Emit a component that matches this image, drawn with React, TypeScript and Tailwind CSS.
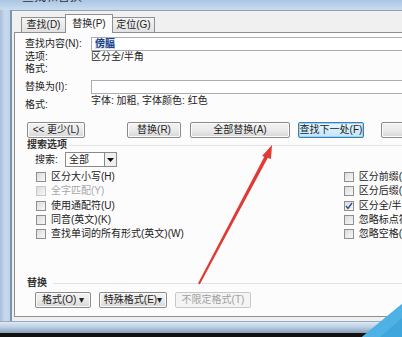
import React from "react";

function Btn({ children, w, primary, disabled }: { children: React.ReactNode; w: string; primary?: boolean; disabled?: boolean }) {
  return (
    <div
      className={`${w} h-[16px] flex items-center justify-center rounded-[2px] border text-[10px] leading-none ${
        primary
          ? "border-[#3c7fb1] bg-gradient-to-b from-[#eaf6fd] to-[#bee6fd] shadow-[inset_0_0_0_1px_#9ed3f3]"
          : disabled
          ? "border-[#c8c8c8] bg-[#f4f4f4] text-[#a0a0a0]"
          : "border-[#8a8a8a] bg-gradient-to-b from-[#f2f2f2] via-[#ebebeb] to-[#d6d6d6] shadow-[inset_0_0_0_1px_#fcfcfc]"
      }`}
    >
      {children}
    </div>
  );
}

function Check({ label, checked, disabled }: { label: string; checked?: boolean; disabled?: boolean }) {
  return (
    <div className="h-[14.3px] flex items-center gap-[5px]">
      <div
        className={`w-[10px] h-[10px] border ${disabled ? "border-[#c8c8c8]" : "border-[#8e8f8f]"} bg-gradient-to-br from-[#dcdcdc] to-[#f8f8f8] flex items-center justify-center`}
      >
        {checked && (
          <svg width="8" height="8" viewBox="0 0 8 8">
            <path d="M1 4 L3 6.5 L7 1" fill="none" stroke="#2a4c8c" strokeWidth="1.3" />
          </svg>
        )}
      </div>
      <span className={`text-[10px] leading-none whitespace-nowrap ${disabled ? "text-[#a8a8a8]" : ""}`}>{label}</span>
    </div>
  );
}

export default function App() {
  return (
    <div className="relative w-[402px] h-[337px] overflow-hidden bg-[#111] font-['Liberation_Sans','Noto_Sans_CJK_SC',sans-serif] text-[11px] leading-[12px] text-[#222]">
      <div className="flex flex-col h-[333px] bg-gradient-to-b from-[#c2d6ea] to-[#b3cbe3] rounded-bl-[6px]">
        {/* title bar */}
        <div className="h-[10px] shrink-0 bg-gradient-to-b from-[#a9c6e4] to-[#cadcef] pl-[22px] overflow-hidden">
          <div className="-mt-[10px] text-[12px] leading-[14px] text-[#333]">查找和替换</div>
        </div>
        <div className="flex flex-1 min-h-0">
          {/* left frame */}
          <div className="w-[12px] shrink-0 bg-gradient-to-r from-[#a8bfd8] via-[#c8daed] to-[#bfd3e8] border-r-2 border-[#7f93aa]" />
          {/* dialog */}
          <div className="flex-1 flex flex-col bg-[#f0f0f0] pl-[2px] pt-[3px] pb-[4px] border-t border-[#8ea3bb]">
            {/* tabs */}
            <div className="flex items-end h-[18px] pl-[7px] shrink-0">
              <div className="w-[45px] h-[15px] flex items-center justify-center border border-[#8e8f8f] border-b-0 bg-gradient-to-b from-[#f4f4f4] to-[#e2e2e2] text-[10px]">查找(D)</div>
              <div className="w-[48px] h-[19px] -mx-px mb-[-1px] relative z-10 flex items-center justify-center border border-[#8e8f8f] border-b-0 bg-[#fcfcfc] text-[10px]">替换(P)</div>
              <div className="w-[43px] h-[15px] flex items-center justify-center border border-[#8e8f8f] border-b-0 bg-gradient-to-b from-[#f4f4f4] to-[#e2e2e2] text-[10px]">定位(G)</div>
            </div>
            {/* panel */}
            <div className="flex-1 flex flex-col bg-[#fcfcfc] border border-[#8e8f8f] border-r-0 pl-[10px] pt-[4px]">
              <div className="flex items-center h-[14px]">
                <div className="w-[66px] text-[10px]">查找内容(N):</div>
                <div className="flex-1 h-[14px] border border-[#abadb3] border-r-0 bg-white flex items-center pl-[3px]">
                  <span className="text-[10px] leading-none font-bold text-[#1b3e82] bg-[#d6e6f7]">傍腷</span>
                </div>
              </div>
              <div className="flex items-center h-[12px]">
                <div className="w-[66px] text-[10px]">选项:</div>
                <div className="text-[10px]">区分全/半角</div>
              </div>
              <div className="flex items-center h-[12px]">
                <div className="w-[66px] text-[10px]">格式:</div>
              </div>
              <div className="flex items-center h-[14px] mt-[5px]">
                <div className="w-[66px] text-[10px]">替换为(I):</div>
                <div className="flex-1 h-[14px] border border-[#abadb3] border-r-0 bg-white" />
              </div>
              <div className="flex h-[18px]">
                <div className="w-[66px] text-[10px] pt-[5px]">格式:</div>
                <div className="text-[10px] pt-[1px] whitespace-nowrap">字体: 加粗, 字体颜色: 红色</div>
              </div>
              {/* buttons */}
              <div className="flex items-center mt-[10px] h-[16px]">
                <div className="ml-[2px]"><Btn w="w-[58px]">&lt;&lt; 更少(L)</Btn></div>
                <div className="ml-[42px]"><Btn w="w-[54px]">替换(R)</Btn></div>
                <div className="ml-[9px]"><Btn w="w-[100px]">全部替换(A)</Btn></div>
                <div className="ml-[8px]"><Btn w="w-[66px]" primary>查找下一处(F)</Btn></div>
                <div className="ml-[17px]"><Btn w="w-[40px]"> </Btn></div>
              </div>
              {/* search options */}
              <div className="flex items-center h-[12px] mt-[1px] ml-[2px]">
                <span className="text-[10px] font-bold text-[#333]">搜索选项</span>
                <div className="flex-1 h-px bg-[#e2e2e2] ml-[3px]" />
              </div>
              <div className="flex items-center h-[15px] mt-[1px] ml-[10px]">
                <span className="text-[10px] w-[30px]">搜索:</span>
                <div className="w-[52px] h-[15px] border border-[#8a8a8a] bg-white flex items-center">
                  <span className="flex-1 pl-[3px] text-[10px]">全部</span>
                  <div className="w-[12px] h-[13px] border-l border-[#8a8a8a] bg-[#f0f0f0] flex items-center justify-center">
                    <svg width="7" height="4" viewBox="0 0 7 4"><path d="M0 0 H7 L3.5 4 Z" fill="#111" /></svg>
                  </div>
                </div>
              </div>
              <div className="flex mt-[3px]">
                <div className="flex flex-col ml-[11px]">
                  <Check label="区分大小写(H)" />
                  <Check label="全字匹配(Y)" disabled />
                  <Check label="使用通配符(U)" />
                  <Check label="同音(英文)(K)" />
                  <Check label="查找单词的所有形式(英文)(W)" />
                </div>
                <div className="flex flex-col ml-[160px]">
                  <Check label="区分前缀(X)" />
                  <Check label="区分后缀(T)" />
                  <Check label="区分全/半角(M)" checked />
                  <Check label="忽略标点符号(S)" />
                  <Check label="忽略空格(W)" />
                </div>
              </div>
              {/* replace section */}
              <div className="flex items-center h-[12px] mt-[36px] ml-[2px]">
                <span className="text-[10px] font-bold text-[#333]">替换</span>
                <div className="flex-1 h-px bg-[#e2e2e2] ml-[6px]" />
              </div>
              <div className="flex items-center h-[16px] mt-[3px] ml-[10px] gap-[8px]">
                <Btn w="w-[56px]">格式(O) ▾</Btn>
                <Btn w="w-[68px]">特殊格式(E)▾</Btn>
                <Btn w="w-[76px]" disabled>不限定格式(T)</Btn>
              </div>
            </div>
          </div>
        </div>
        <div className="h-[12px] shrink-0 bg-gradient-to-b from-[#dfe9f4] via-[#b8cde3] to-[#8a9fb6] border-t border-[#9aa9bb]" />
      </div>
      {/* red arrow overlay */}
      <svg className="absolute inset-0 pointer-events-none" width="402" height="337" viewBox="0 0 402 337">
        <path d="M199 283 L199.5 283.5 L268 156 L266 155 Z" fill="#e03a36" stroke="#e03a36" strokeWidth="1.5" strokeLinejoin="round" />
        <path d="M272 145 L262 156 L271 159 Z" fill="#e03a36" />
        <polygon points="362,337 402,304 402,337" fill="#3ea6dd" />
        <polygon points="362,337 402,304 402,318 380,337" fill="#4fb2e6" />
      </svg>
    </div>
  );
}
